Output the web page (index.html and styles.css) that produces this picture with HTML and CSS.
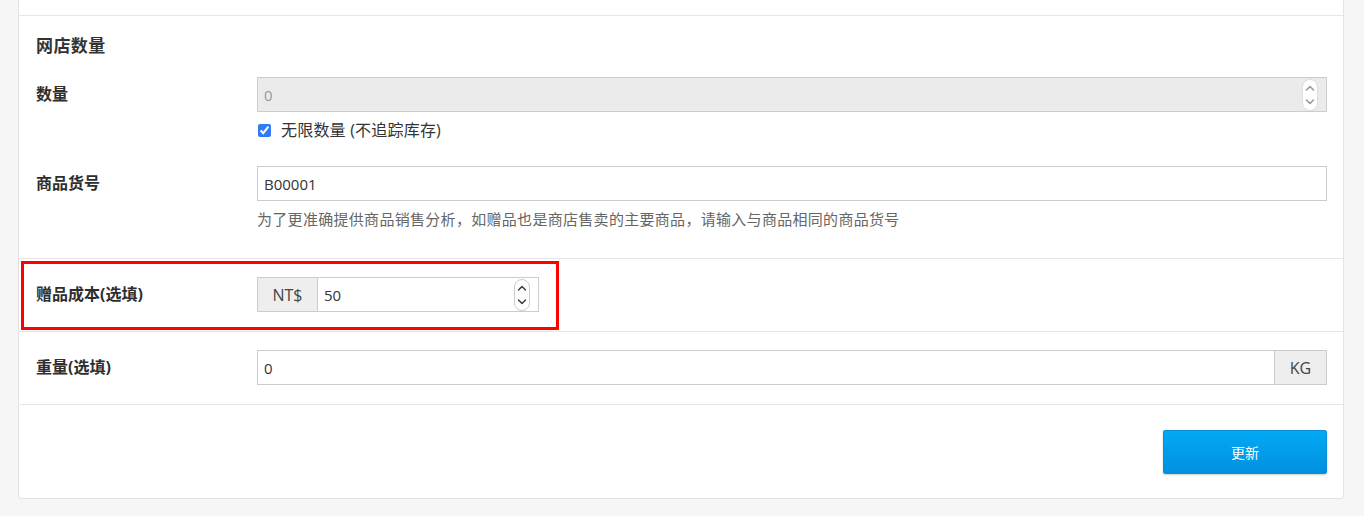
FILE: index.html
```html
<!DOCTYPE html>
<html lang="zh-CN">
<head>
    <meta charset="UTF-8">
    <meta name="viewport" content="width=device-width, initial-scale=1.0">
    <title>赠品设定</title>
    <link rel="stylesheet" href="styles.css">
</head>
<body>
    <div class="page">
        <div class="card">
            <!-- bottom of the previous panel section -->
            <div class="section section-stub"></div>

            <!-- Inventory -->
            <div class="section section-stock">
                <h3 class="section-title">网店数量</h3>
                <div class="form-row">
                    <label class="form-label">数量</label>
                    <div class="form-control">
                        <div class="field field-disabled">
                            <input type="text" value="0" disabled>
                            <span class="spin spin-muted">
                                <svg width="16" height="32" viewBox="0 0 16 32">
                                    <rect x="0.5" y="0.5" width="15" height="31" rx="7.5" fill="#fff" stroke="#ddd"/>
                                    <path d="M4.5 11 L8 7.5 L11.5 11" fill="none" stroke="currentColor" stroke-width="1.6" stroke-linecap="round" stroke-linejoin="round"/>
                                    <path d="M4.5 21 L8 24.5 L11.5 21" fill="none" stroke="currentColor" stroke-width="1.6" stroke-linecap="round" stroke-linejoin="round"/>
                                </svg>
                            </span>
                        </div>
                        <label class="check">
                            <input type="checkbox" checked>
                            <span>无限数量 (不追踪库存)</span>
                        </label>
                    </div>
                </div>
                <div class="form-row row-sku">
                    <label class="form-label">商品货号</label>
                    <div class="form-control">
                        <div class="field">
                            <input type="text" value="B00001">
                        </div>
                        <p class="help">为了更准确提供商品销售分析，如赠品也是商店售卖的主要商品，请输入与商品相同的商品货号</p>
                    </div>
                </div>
            </div>

            <!-- Cost -->
            <div class="section section-cost">
                <div class="highlight">
                    <label class="form-label">赠品成本(选填)</label>
                    <div class="input-group group-cost">
                        <span class="addon addon-left">NT$</span>
                        <div class="field">
                            <input type="text" value="50">
                            <span class="spin">
                                <svg width="16" height="32" viewBox="0 0 16 32">
                                    <rect x="0.5" y="0.5" width="15" height="31" rx="7.5" fill="#fff" stroke="#ccc"/>
                                    <path d="M4.5 11 L8 7.5 L11.5 11" fill="none" stroke="currentColor" stroke-width="1.6" stroke-linecap="round" stroke-linejoin="round"/>
                                    <path d="M4.5 21 L8 24.5 L11.5 21" fill="none" stroke="currentColor" stroke-width="1.6" stroke-linecap="round" stroke-linejoin="round"/>
                                </svg>
                            </span>
                        </div>
                    </div>
                </div>
            </div>

            <!-- Weight -->
            <div class="section section-weight">
                <div class="form-row">
                    <label class="form-label">重量(选填)</label>
                    <div class="form-control">
                        <div class="input-group">
                            <div class="field">
                                <input type="text" value="0">
                            </div>
                            <span class="addon addon-right">KG</span>
                        </div>
                    </div>
                </div>
            </div>

            <!-- Actions -->
            <div class="section section-actions">
                <button class="btn-primary">更新</button>
            </div>
        </div>
    </div>
</body>
</html>
```

FILE: styles.css
```css
/* General Styles */
body {
    margin: 0;
    background: #f6f6f6;
    font-family: "Open Sans", "Noto Sans CJK SC", sans-serif;
    color: #333;
}
.page {
    padding: 0 20px 17px 18px;
}
.card {
    background: #fff;
    border: 1px solid #e4e4e4;
    border-top: none;
    border-radius: 0 0 4px 4px;
}

/* Sections */
.section {
    border-top: 1px solid #e6e6e6;
}
.section-stub {
    height: 15px;
    border-top: none;
}
.section-stock {
    padding: 20px 16px 30px 17px;
}
.section-title {
    margin: 0 0 21px;
    font-size: 17px;
    line-height: 20px;
    font-weight: bold;
    letter-spacing: 0.4px;
}
.section-cost {
    padding: 2px 16px 1px 2px;
}
.section-weight {
    padding: 18px 16px 19px 17px;
}
.section-actions {
    display: flex;
    justify-content: flex-end;
    padding: 25px 16px 24px 17px;
}

/* Form rows */
.form-row {
    display: flex;
    align-items: flex-start;
}
.row-sku {
    margin-top: 27px;
}
.form-label {
    flex: 0 0 221px;
    font-size: 16px;
    font-weight: bold;
    line-height: 35px;
    color: #2e2e2e;
}
.form-control {
    flex: 1;
    min-width: 0;
}

/* Inputs */
.field {
    display: flex;
    align-items: center;
    height: 35px;
    min-width: 0;
    box-sizing: border-box;
    border: 1px solid #ccc;
    background: #fff;
    padding-right: 8px;
}
.field input {
    flex: 1;
    min-width: 0;
    width: 0;
    height: 100%;
    border: none;
    outline: none;
    background: transparent;
    padding: 0 6px;
    font-family: "Open Sans", "Noto Sans CJK SC", sans-serif;
    font-size: 15px;
    color: #333;
}
.field-disabled {
    background: #ebebeb;
}
.field-disabled input {
    color: #999;
}
.spin {
    display: flex;
    color: #444;
}
.spin-muted {
    color: #999;
}

/* Input groups */
.input-group {
    display: flex;
}
.input-group .field {
    flex: 1;
}
.group-cost {
    width: 282px;
}
.addon {
    flex-shrink: 0;
    display: flex;
    align-items: center;
    justify-content: center;
    height: 35px;
    box-sizing: border-box;
    background: #eee;
    border: 1px solid #ccc;
    font-size: 16px;
    color: #444;
}
.addon-left {
    width: 60px;
    border-right: none;
}
.addon-right {
    width: 52px;
    border-left: none;
}

/* Checkbox and help */
.check {
    display: flex;
    align-items: center;
    margin-top: 9px;
    font-size: 16px;
    line-height: 18px;
    letter-spacing: 0.2px;
}
.check input {
    margin: 0 10px 0 1px;
    width: 13px;
    height: 13px;
    accent-color: #2f7cf6;
}
.help {
    margin: 9px 0 0;
    font-size: 15px;
    line-height: 18px;
    letter-spacing: 0.3px;
    color: #666;
}

/* Highlighted row */
.highlight {
    display: inline-flex;
    align-items: center;
    border: 3px solid #f00;
    padding: 13px 17px 15px 12px;
}

/* Button */
.btn-primary {
    width: 164px;
    height: 44px;
    border: 1px solid #0a8ed8;
    border-radius: 2px;
    background: linear-gradient(#03a9f4, #0091df);
    box-shadow: 0 1px 2px rgba(0, 0, 0, 0.2);
    color: #fff;
    font-family: "Open Sans", "Noto Sans CJK SC", sans-serif;
    font-size: 14px;
    cursor: pointer;
}
```
